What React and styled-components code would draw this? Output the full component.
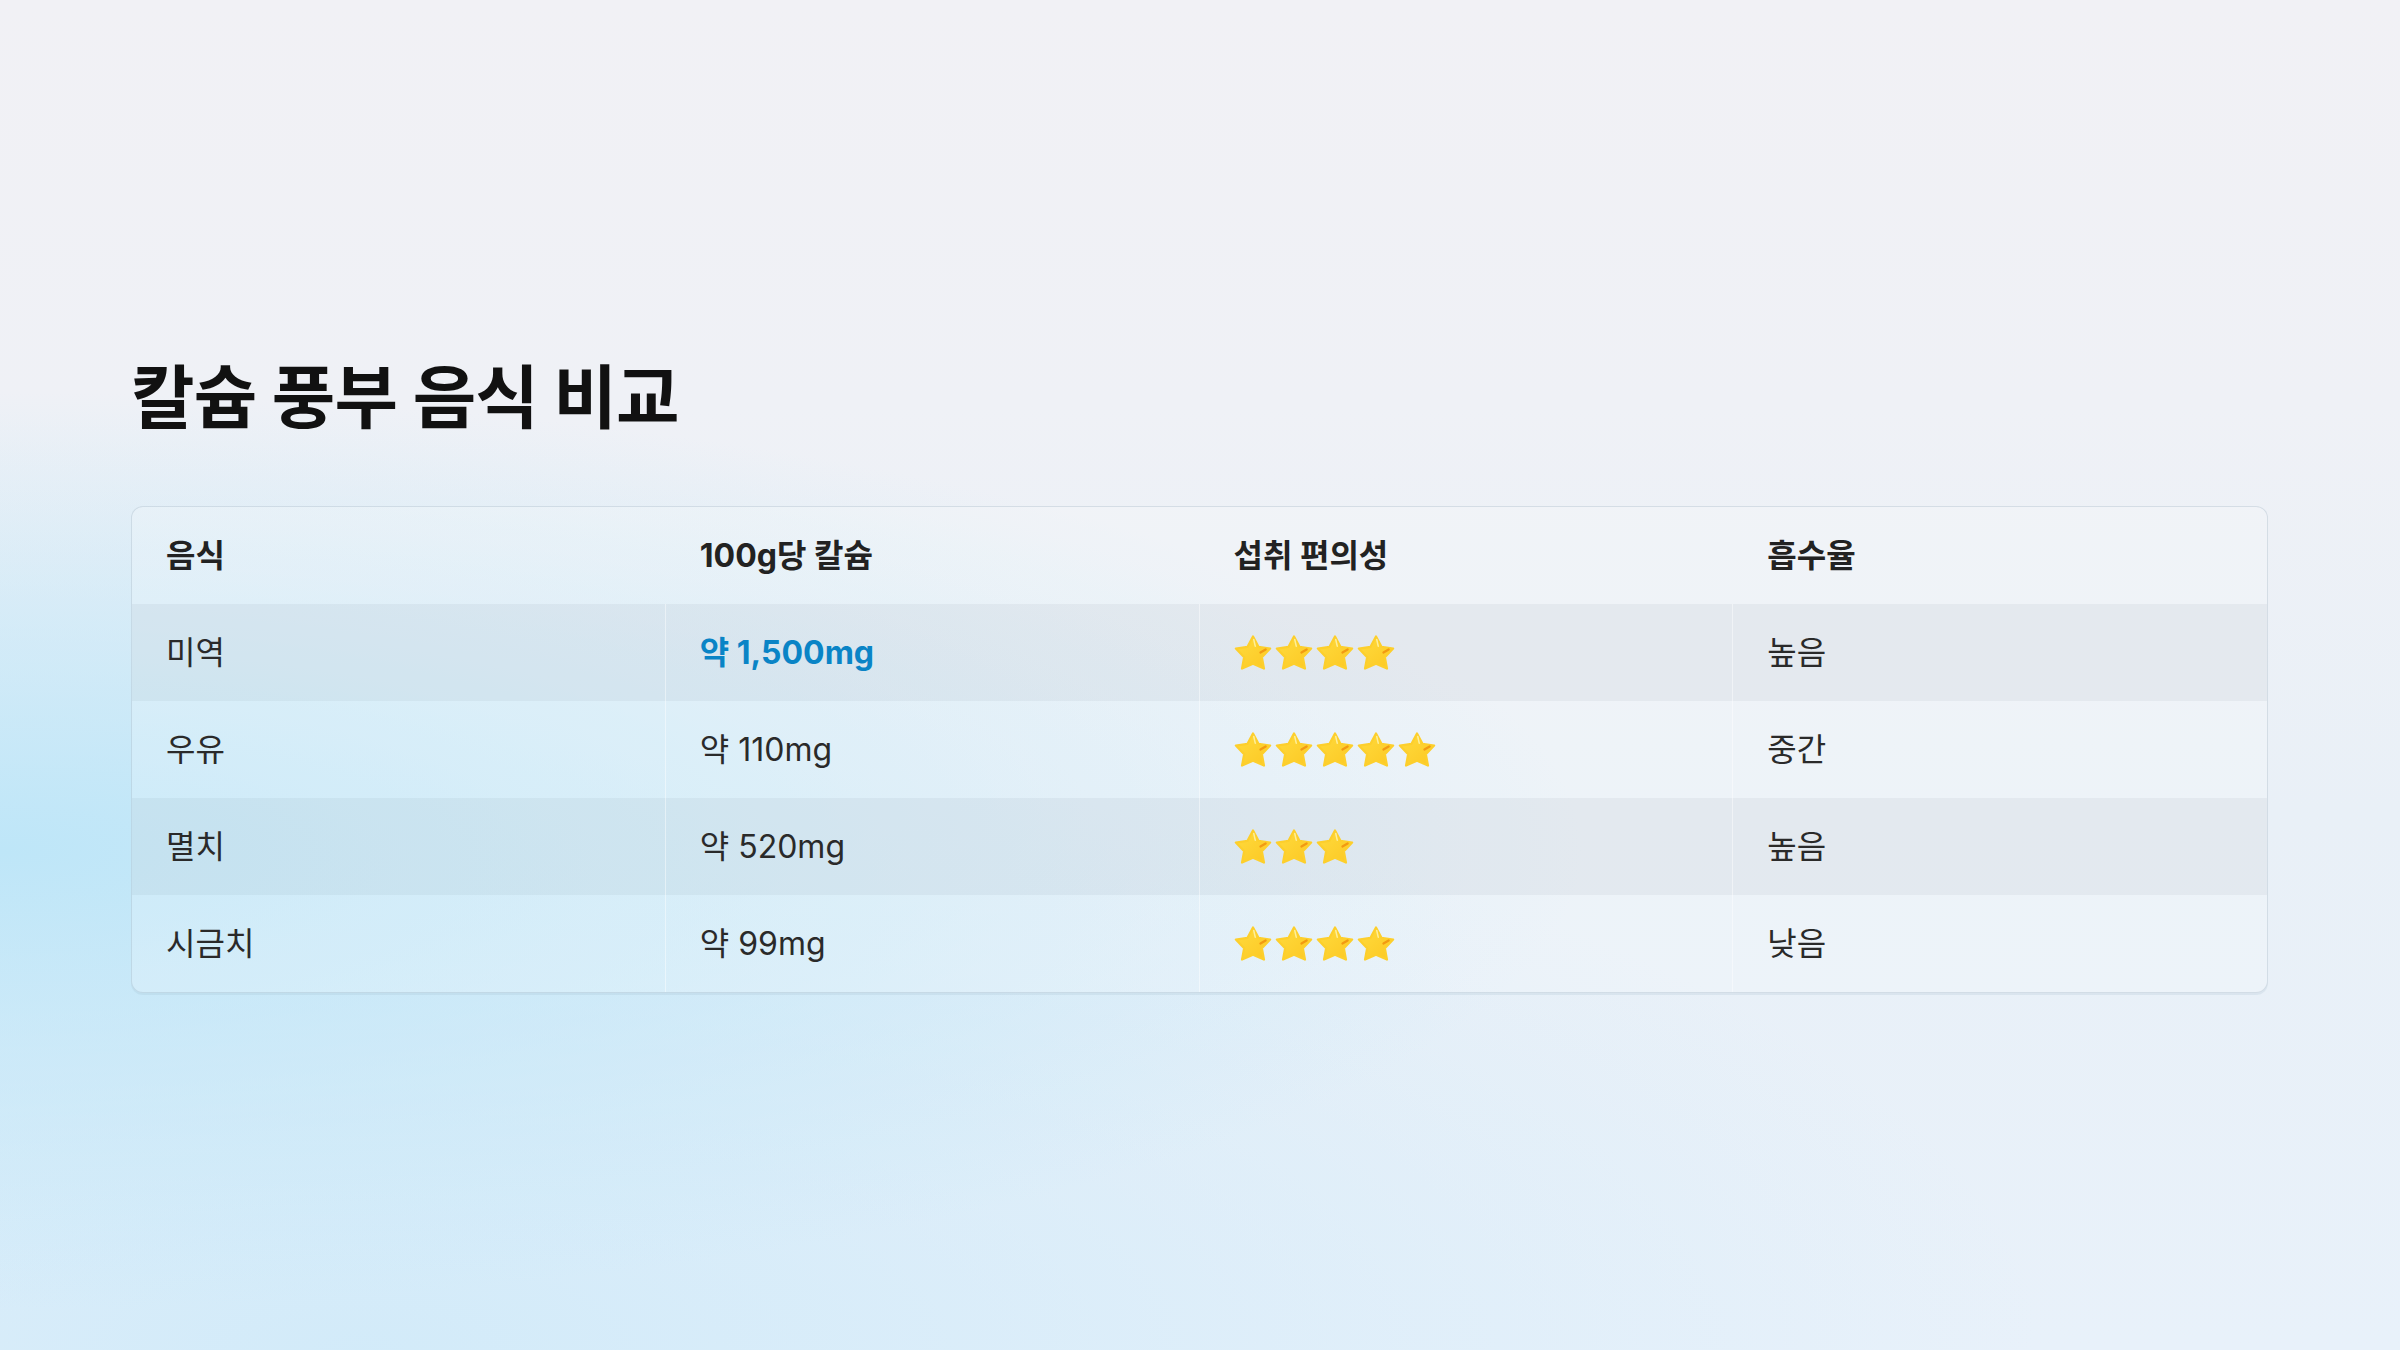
import React from 'react';
import styled, { createGlobalStyle } from 'styled-components';

const Global = createGlobalStyle`
  html, body { margin:0; padding:0; }
  body { font-family: Inter, "Noto Sans CJK KR", sans-serif; color:#222; }
`;

const Page = styled.div`
  min-height:100vh; box-sizing:border-box;
  display:flex; flex-direction:column; justify-content:center;
  padding:0 132px 0 131px;
  background:
    radial-gradient(ellipse 66% 34% at 0% 63%, rgba(190,230,248,1), rgba(190,230,248,0) 100%),
    radial-gradient(ellipse 70% 45% at 15% 100%, rgba(208,234,249,.9), rgba(208,234,249,0) 100%),
    linear-gradient(180deg, #f1f1f5 0%, #eff1f6 30%, #e9f0f7 60%, #e8f1fa 100%);
`;

const Title = styled.h1`
  margin:0 0 66px; font-size:69px; font-weight:700; color:#111;
  letter-spacing:-.012em; line-height:1.2;
`;

const Table = styled.table`
  width:100%; table-layout:fixed; border-collapse:separate; border-spacing:0;
  border:1px solid rgba(140,160,180,.28); border-radius:12px; overflow:hidden;
  background:rgba(255,255,255,.2);
  box-shadow:0 2px 0 rgba(150,175,195,.18);
`;

const Row = styled.tr`
  background:${p => p.$striped ? 'rgba(60,90,110,.06)' : 'transparent'};
`;

const Th = styled.th`
  text-align:left; padding:30px 34px; font-size:32px; font-weight:700;
  color:#222; line-height:37px;
`;

const Td = styled.td`
  padding:30px 34px; font-size:32px; font-weight:400; color:#2a2a2a; line-height:37px;
  border-right:1px solid rgba(255,255,255,.45);
  &:last-child{ border-right:0; }
`;

const Amount = styled.span`
  color:${p => p.$hl ? '#0a84c6' : 'inherit'};
  font-weight:${p => p.$hl ? 700 : 400};
`;

const Stars = styled.div` display:flex; align-items:center; gap:3px; height:37px; `;

function Star(){
  return (
    <svg width="38" height="35" viewBox="0 0 100 94">
      <defs>
        <linearGradient id="sg" x1="0" y1="0" x2="1" y2="1">
          <stop offset="0" stopColor="#ffdb3d"/>
          <stop offset="1" stopColor="#fcc824"/>
        </linearGradient>
      </defs>
      <path d="M50 4 L64.7 31.8 L96 36.5 L73.8 59.7 L79.4 90 L50 77 L20.6 90 L26.2 59.7 L4 36.5 L35.3 31.8 Z"
        fill="url(#sg)" stroke="#fdcf2c" strokeWidth="6" strokeLinejoin="round"/>
      <path d="M70 47 L84 39" stroke="#f29a12" strokeWidth="6" strokeLinecap="round"/>
      <path d="M52 12 L56 30" stroke="#fff3a6" strokeWidth="4" strokeLinecap="round" opacity=".9"/>
    </svg>
  );
}

const rows = [
  { food:'미역', amount:'약 1,500mg', hl:true, stars:4, abs:'높음' },
  { food:'우유', amount:'약 110mg', stars:5, abs:'중간' },
  { food:'멸치', amount:'약 520mg', stars:3, abs:'높음' },
  { food:'시금치', amount:'약 99mg', stars:4, abs:'낮음' },
];

export default function App(){
  return (
    <Page>
      <Global/>
      <Title>칼슘 풍부 음식 비교</Title>
      <Table>
        <thead>
          <tr>
            <Th>음식</Th><Th>100g당 칼슘</Th><Th>섭취 편의성</Th><Th>흡수율</Th>
          </tr>
        </thead>
        <tbody>
          {rows.map((r, i) => (
            <Row key={r.food} $striped={i % 2 === 0}>
              <Td>{r.food}</Td>
              <Td><Amount $hl={r.hl}>{r.amount}</Amount></Td>
              <Td><Stars>{Array.from({ length:r.stars }).map((_, k) => <Star key={k}/>)}</Stars></Td>
              <Td>{r.abs}</Td>
            </Row>
          ))}
        </tbody>
      </Table>
    </Page>
  );
}
